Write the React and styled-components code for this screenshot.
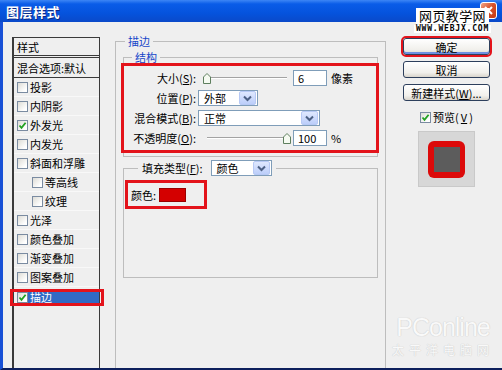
import styled, { createGlobalStyle } from 'styled-components'

const GlobalStyle = createGlobalStyle`
  body {
    margin: 0;
    font-family: "Noto Sans CJK SC", "Liberation Sans", sans-serif;
    font-size: 11px;
    color: #000;
  }
`

/* ── Window frame ── */
const Window = styled.div`
  position: relative;
  width: 502px;
  height: 370px;
  display: flex;
  flex-direction: column;
  overflow: hidden;
  background: #efefef;
`

const TitleBar = styled.div`
  height: 22px;
  flex-shrink: 0;
  display: flex;
  align-items: center;
  padding-left: 6px;
  background: linear-gradient(#3d86f5 0%, #0a5ce8 18%, #0553dd 60%, #0a49c9 100%);
  color: #fff;
  font-size: 13px;
  font-weight: 700;
  text-shadow: 1px 1px 0 #0b2a86;
  letter-spacing: 0.5px;
`

const CloseBtn = styled.div`
  position: absolute;
  top: 2px;
  right: 5px;
  width: 17px;
  height: 17px;
  box-sizing: border-box;
  border: 1px solid #fff;
  border-radius: 3px;
  background: linear-gradient(135deg, #f0a68a, #d9542c 45%, #c33a14);
  display: flex;
  align-items: center;
  justify-content: center;
`

const Watermark = styled.div`
  position: absolute;
  top: 8px;
  right: 11px;
  display: flex;
  flex-direction: column;
  align-items: center;
  gap: 1px;
`

const WatermarkName = styled.div`
  background: #fff;
  color: #000;
  font-size: 13px;
  line-height: 16px;
  padding: 0 3px;
  letter-spacing: 0.4px;
`

const WatermarkUrl = styled.div`
  background: #fff;
  color: #000;
  font-family: "DejaVu Sans Mono", monospace;
  font-size: 8px;
  font-weight: 700;
  line-height: 8px;
  letter-spacing: 0.8px;
  padding: 0 2px;
`

const Body = styled.div`
  flex: 1;
  min-height: 0;
  display: flex;
  border-left: 3px solid #1850d6;
  border-bottom: 2px solid #0d1f5c;
  padding-left: 9px;
`

/* ── Style list ── */
const StyleList = styled.div`
  width: 88px;
  box-sizing: border-box;
  margin-top: 15px;
  border: 1px solid #3a3a3a;
  border-left-width: 2px;
  border-bottom: none;
  display: flex;
  flex-direction: column;
`

const ListHead = styled.div`
  height: 17px;
  display: flex;
  align-items: center;
  padding-left: 3px;
  border-bottom: ${({ $double }) => ($double ? '3px double #3a3a3a' : '1px solid #3a3a3a')};
  ${({ $tall }) => $tall && 'height: 19px;'}
`

const ListItem = styled.div`
  position: relative;
  height: 19px;
  box-sizing: border-box;
  display: flex;
  align-items: center;
  gap: 2px;
  padding-left: ${({ $indent }) => ($indent ? 18 : 3)}px;
  border-bottom: 1px solid #f8f8f8;

  ${({ $selected }) => $selected && `
    background: #316ac5;
    background-clip: content-box;
    padding-top: 4px;
    padding-bottom: 2px;
    color: #fff;
    &::after {
      content: '';
      position: absolute;
      top: 2px; bottom: -1px; left: -4px; right: -5px;
      border: 3px solid #e3131b;
    }
  `}
`

const Box = styled.span`
  width: 11px;
  height: 11px;
  box-sizing: border-box;
  flex-shrink: 0;
  border: 1px solid #7a8ba1;
  background: linear-gradient(135deg, #dddcd6, #fff 80%);
  display: inline-flex;
  align-items: center;
  justify-content: center;
`

/* ── Group boxes ── */
const Group = styled.fieldset`
  margin: 0;
  padding: 0;
  min-width: 0;
  border: 1px solid #bdbdbd;
`

const MainGroup = styled(Group)`
  width: 271px;
  box-sizing: border-box;
  margin: 11px 0 0 15px;
  padding: 0 7px;
  border-bottom: none;
`

const StructGroup = styled(Group)`
  padding-bottom: 3px;
`

const FillGroup = styled(Group)`
  margin-top: 3px;
  height: 118px;
  box-sizing: border-box;
`

const Legend = styled.legend`
  margin-left: ${({ $ml }) => $ml}px;
  padding: 0 3px;
  line-height: 16px;
  color: ${({ $blue }) => ($blue ? '#1746c9' : '#000')};
`

const FillLegend = styled.legend`
  margin-left: 14px;
  padding: 0 4px;
  display: flex;
  align-items: center;
  gap: 8px;
`

/* ── Structure rows ── */
const RedBox = styled.div`
  margin: -2px -2px 0 -3px;
  border: 3px solid #e3131b;
  padding: 2px 0;
  display: grid;
  grid-template-columns: 72px 1fr;
  grid-auto-rows: 20px;
  column-gap: 2px;
  align-items: center;
`

const Label = styled.span`
  justify-self: end;
  white-space: nowrap;
`

const Control = styled.div`
  display: flex;
  align-items: center;
`

const Slider = styled.div`
  position: relative;
  width: 88px;
  height: 12px;
  margin-left: 5px;

  &::before {
    content: '';
    position: absolute;
    left: 4px; right: 4px; top: 5px;
    border-top: 1px solid #a3a3a3;
    border-bottom: 1px solid #fff;
  }
`

const Thumb = styled.svg`
  position: absolute;
  top: 1px;
`

const Field = styled.div`
  width: 34px;
  height: 16px;
  box-sizing: border-box;
  margin-left: 2px;
  border: 1px solid #7f9db9;
  background: #fff;
  padding-left: 4px;
  line-height: 14px;
`

const Unit = styled.span`
  margin-left: 4px;
`

const Select = styled.div`
  width: ${({ $w }) => $w}px;
  height: 16px;
  box-sizing: border-box;
  border: 1px solid #7f9db9;
  background: #fff;
  padding: 1px;
  display: flex;
  align-items: center;
`

const SelectText = styled.span`
  flex: 1;
  padding-left: 4px;
  line-height: 14px;
`

const DropBtn = styled.span`
  width: 15px;
  height: 12px;
  border-radius: 2px;
  border: 1px solid #b7c9f5;
  background: linear-gradient(#dfe8fe, #bccefa);
  display: flex;
  align-items: center;
  justify-content: center;
`

const ColorBox = styled.div`
  margin: 4px 0 0 1px;
  width: 82px;
  height: 29px;
  box-sizing: border-box;
  border: 3px solid #e3131b;
  padding-left: 3px;
  display: flex;
  align-items: center;
  gap: 3px;
`

const Swatch = styled.span`
  width: 27px;
  height: 14px;
  box-sizing: border-box;
  border: 1px solid #9a0000;
  background: #d40000;
`

/* ── Right column ── */
const Side = styled.div`
  width: 87px;
  margin: 16px 0 0 17px;
  display: flex;
  flex-direction: column;
  align-items: center;
  gap: 6px;
`

const Button = styled.button`
  width: 87px;
  height: 17px;
  padding: 0;
  box-sizing: border-box;
  border: 1px solid #2d3f5c;
  border-radius: 3px;
  background: linear-gradient(#ffffff, #f1f0ec 70%, #d9d5cc);
  font: 11px "Noto Sans CJK SC", sans-serif;
  line-height: 14px;
  color: #000;

  ${({ $default }) => $default && `
    outline: 2px solid #e3131b;
    outline-offset: 0;
    box-shadow: inset 0 -2px 0 #6d8fe0;
  `}
`

const PreviewRow = styled.label`
  margin-top: 2px;
  display: flex;
  align-items: center;
  gap: 2px;
`

const Preview = styled.div`
  width: 57px;
  height: 56px;
  box-sizing: border-box;
  border: 1px solid #c9c9c9;
  background: #d7d7d7;
  display: flex;
  align-items: center;
  justify-content: center;
`

const Stroke = styled.div`
  width: 37px;
  height: 37px;
  border-radius: 6px;
  background: #dc0a0a;
  display: flex;
  align-items: center;
  justify-content: center;
`

const LayerFill = styled.div`
  width: 26px;
  height: 25px;
  background: #5c5c5c;
`

const PcOnline = styled.div`
  position: absolute;
  right: 8px;
  bottom: 12px;
  display: flex;
  flex-direction: column;
  align-items: center;
  color: #fbfbfb;
  text-shadow: 0 0 1px #c8c8c8, 0 0 1px #c8c8c8;
  opacity: 0.85;
`

const PcBrand = styled.span`
  font-family: "Liberation Sans", sans-serif;
  font-size: 25px;
  line-height: 30px;
  letter-spacing: -1px;
`

const PcSub = styled.span`
  font-size: 12px;
  letter-spacing: 5px;
  line-height: 16px;
`

const Tick = () => (
  <svg width="9" height="9" viewBox="0 0 9 9">
    <path d="M1.5 4.5 L3.5 6.8 L7.6 1.8" fill="none" stroke="#21a121" strokeWidth="1.8" />
  </svg>
)

const Chevron = () => (
  <svg width="9" height="7" viewBox="0 0 9 7">
    <path d="M1 1.5 L4.5 5 L8 1.5" fill="none" stroke="#4d6185" strokeWidth="2" />
  </svg>
)

const SliderTrack = ({ pos }) => (
  <Slider>
    <Thumb width="8" height="11" viewBox="0 0 8 11" style={{ left: pos * 80 }}>
      <polygon points="0.5,10.5 0.5,4 4,0.5 7.5,4 7.5,10.5" fill="#f5faf1" stroke="#5e7f5e" />
    </Thumb>
  </Slider>
)

const effects = [
  { name: '投影' },
  { name: '内阴影' },
  { name: '外发光', on: true },
  { name: '内发光' },
  { name: '斜面和浮雕' },
  { name: '等高线', indent: true },
  { name: '纹理', indent: true },
  { name: '光泽' },
  { name: '颜色叠加' },
  { name: '渐变叠加' },
  { name: '图案叠加' },
  { name: '描边', on: true, selected: true },
]

export default function App() {
  return (
    <Window>
      <GlobalStyle />
      <TitleBar>图层样式</TitleBar>
      <CloseBtn>
        <svg width="9" height="9" viewBox="0 0 9 9">
          <path d="M1 1 L8 8 M8 1 L1 8" stroke="#fff" strokeWidth="2" />
        </svg>
      </CloseBtn>
      <Watermark>
        <WatermarkName>网页教学网</WatermarkName>
        <WatermarkUrl>WWW.WEBJX.COM</WatermarkUrl>
      </Watermark>

      <Body>
        <StyleList>
          <ListHead $double>样式</ListHead>
          <ListHead $tall>混合选项:默认</ListHead>
          {effects.map((fx) => (
            <ListItem key={fx.name} $indent={fx.indent} $selected={fx.selected}>
              <Box>{fx.on && <Tick />}</Box>
              {fx.name}
            </ListItem>
          ))}
        </StyleList>

        <MainGroup>
          <Legend $blue $ml={2}>描边</Legend>
          <StructGroup>
            <Legend $blue $ml={8}>结构</Legend>
            <RedBox>
              <Label>大小(<u>S</u>):</Label>
              <Control>
                <SliderTrack pos={0} />
                <Field>6</Field>
                <Unit>像素</Unit>
              </Control>

              <Label>位置(<u>P</u>):</Label>
              <Control>
                <Select $w={60}>
                  <SelectText>外部</SelectText>
                  <DropBtn><Chevron /></DropBtn>
                </Select>
              </Control>

              <Label>混合模式(<u>B</u>):</Label>
              <Control>
                <Select $w={122}>
                  <SelectText>正常</SelectText>
                  <DropBtn><Chevron /></DropBtn>
                </Select>
              </Control>

              <Label>不透明度(<u>O</u>):</Label>
              <Control>
                <SliderTrack pos={1} />
                <Field>100</Field>
                <Unit>%</Unit>
              </Control>
            </RedBox>
          </StructGroup>

          <FillGroup>
            <FillLegend>
              <span>填充类型(<u>F</u>):</span>
              <Select $w={61}>
                <SelectText>颜色</SelectText>
                <DropBtn><Chevron /></DropBtn>
              </Select>
            </FillLegend>
            <ColorBox>
              颜色:
              <Swatch />
            </ColorBox>
          </FillGroup>
        </MainGroup>

        <Side>
          <Button $default>确定</Button>
          <Button>取消</Button>
          <Button>新建样式(<u>W</u>)...</Button>
          <PreviewRow>
            <Box><Tick /></Box>
            预览(<u>V</u>)
          </PreviewRow>
          <Preview>
            <Stroke>
              <LayerFill />
            </Stroke>
          </Preview>
        </Side>
      </Body>

      <PcOnline>
        <PcBrand>PConline</PcBrand>
        <PcSub>太平洋电脑网</PcSub>
      </PcOnline>
    </Window>
  )
}
